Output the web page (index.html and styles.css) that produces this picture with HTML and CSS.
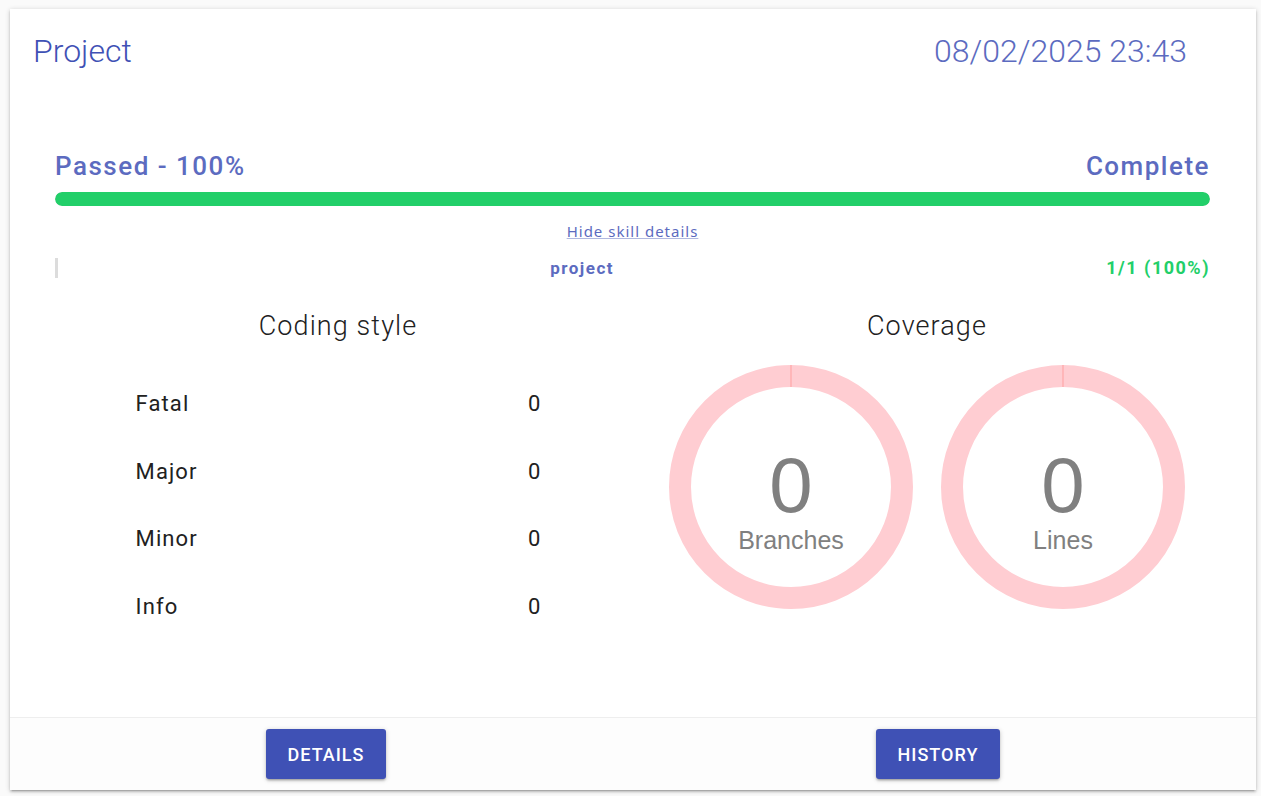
FILE: index.html
```html
<!DOCTYPE html>
<html lang="en">
<head>
<meta charset="utf-8">
<title>Project</title>
<link rel="stylesheet" href="styles.css">
</head>
<body>
<div class="card">
  <header class="card-header">
    <h1 class="title">Project</h1>
    <div class="date">08/02/2025 23:43</div>
  </header>
  <main class="card-body">
    <div class="status">
      <span>Passed - 100%</span>
      <span>Complete</span>
    </div>
    <div class="bar"><div class="bar-fill" style="width:100%"></div></div>
    <div class="toggle"><a href="#" class="toggle-link">Hide skill details</a></div>
    <div class="skill">
      <div class="skill-name">project</div>
      <div class="skill-value">1/1 (100%)</div>
    </div>
    <div class="columns">
      <section class="col">
        <h2 class="col-title">Coding style</h2>
        <table class="style-table">
          <tr><td>Fatal</td><td class="num">0</td></tr>
          <tr><td>Major</td><td class="num">0</td></tr>
          <tr><td>Minor</td><td class="num">0</td></tr>
          <tr><td>Info</td><td class="num">0</td></tr>
        </table>
      </section>
      <section class="col">
        <h2 class="col-title">Coverage</h2>
        <div class="donuts">
          <div class="donut">
            <svg class="ring" width="244" height="244" viewBox="0 0 244 244">
              <circle cx="122" cy="122" r="111" fill="none" stroke="#ffcdd2" stroke-width="22"/>
              <line x1="122" y1="0" x2="122" y2="22" stroke="#ff9f9f" stroke-width="1"/>
            </svg>
            <div class="donut-text">
              <div class="donut-num">0</div>
              <div class="donut-label">Branches</div>
            </div>
          </div>
          <div class="donut">
            <svg class="ring" width="244" height="244" viewBox="0 0 244 244">
              <circle cx="122" cy="122" r="111" fill="none" stroke="#ffcdd2" stroke-width="22"/>
              <line x1="122" y1="0" x2="122" y2="22" stroke="#ff9f9f" stroke-width="1"/>
            </svg>
            <div class="donut-text">
              <div class="donut-num">0</div>
              <div class="donut-label">Lines</div>
            </div>
          </div>
        </div>
      </section>
    </div>
  </main>
  <footer class="card-footer">
    <div class="foot-cell"><button class="btn">Details</button></div>
    <div class="foot-cell"><button class="btn">History</button></div>
  </footer>
</div>
</body>
</html>
```

FILE: styles.css
```css
* { box-sizing: border-box; }
html, body { height: 100%; }
body {
  margin: 0;
  padding: 9px 5px 6px 10px;
  background: #fafafa;
  font-family: Roboto, "Liberation Sans", sans-serif;
}
.card {
  height: 781px;
  background: #fff;
  box-shadow: 0 2px 2px rgba(0,0,0,0.14), 0 3px 1px -2px rgba(0,0,0,0.12), 0 1px 5px rgba(0,0,0,0.2);
  display: flex;
  flex-direction: column;
}
.card-header {
  display: flex;
  justify-content: space-between;
  align-items: center;
  padding: 22px 69px 0 23px;
  height: 62px;
}
.title {
  margin: 0;
  font-weight: 300;
  font-size: 32px;
  line-height: 40px;
  color: #3f51b5;
}
.date {
  font-weight: 300;
  font-size: 32px;
  line-height: 40px;
  color: #5c6bc0;
}
.card-body {
  flex: 1;
  padding: 0 46px 0 45px;
}
.status {
  margin-top: 80px;
  display: flex;
  justify-content: space-between;
  font-size: 26px;
  line-height: 30px;
  font-weight: 500;
  color: #5c6bc0;
  letter-spacing: 1.5px;
}
.bar {
  margin-top: 11px;
  height: 14px;
  border-radius: 7px;
  background: #e0e0e0;
  overflow: hidden;
}
.bar-fill {
  height: 100%;
  background: #22cf69;
  border-radius: 7px;
}
.toggle {
  margin-top: 15px;
  text-align: center;
  line-height: 20px;
}
.toggle-link {
  font-family: "Noto Sans", sans-serif;
  font-size: 15px;
  letter-spacing: 1px;
  color: #5c6bc0;
  text-decoration: underline;
  text-decoration-color: #b0b8e0;
}
.skill {
  margin-top: 16px;
  display: flex;
  align-items: center;
  height: 20px;
  font-weight: 700;
  font-size: 17px;
  letter-spacing: 1.5px;
}
.skill-name {
  flex: 1;
  border-left: 3px solid #dcdcdc;
  height: 20px;
  line-height: 20px;
  text-align: center;
  color: #5c6bc0;
}
.skill-value {
  color: #22cf69;
  line-height: 20px;
  font-size: 18px;
}
.columns {
  display: grid;
  grid-template-columns: 1fr 1fr;
  column-gap: 23px;
  margin-top: 33px;
}
.col-title {
  margin: 0;
  text-align: center;
  font-weight: 300;
  font-size: 27px;
  line-height: 30px;
  letter-spacing: 1.1px;
  color: #212121;
}
.style-table {
  width: 80%;
  margin: 29px auto 0;
  border-collapse: collapse;
}
.style-table td {
  height: 67.5px;
  padding: 0 24px;
  font-size: 22px;
  letter-spacing: 1.1px;
  color: #212121;
}
.style-table td.num { text-align: right; letter-spacing: 0; }
.donuts {
  margin-top: 24px;
  display: flex;
  justify-content: center;
  gap: 28px;
}
.donut {
  display: grid;
  width: 244px;
  height: 244px;
}
.ring, .donut-text { grid-area: 1 / 1; }
.donut-text {
  padding-top: 88px;
  text-align: center;
  font-family: "Liberation Sans", Arial, sans-serif;
  color: #808080;
}
.donut-num {
  font-size: 78px;
  line-height: 64px;
}
.donut-label {
  margin-top: 8px;
  font-size: 25px;
  line-height: 30px;
}
.card-footer {
  border-top: 1px solid #eeeeee;
  background: #fdfdfd;
  display: grid;
  grid-template-columns: 1fr 1fr;
  padding: 11px 12px 11px 10px;
}
.foot-cell { display: flex; justify-content: center; }
.btn {
  height: 50px;
  padding: 0 22px;
  border: none;
  border-radius: 3px;
  background: #3f51b5;
  color: #fff;
  font-family: Roboto, sans-serif;
  font-weight: 500;
  font-size: 18px;
  letter-spacing: 1px;
  text-transform: uppercase;
  box-shadow: 0 2px 2px rgba(0,0,0,0.14), 0 3px 1px -2px rgba(0,0,0,0.12), 0 1px 5px rgba(0,0,0,0.2);
}
```
